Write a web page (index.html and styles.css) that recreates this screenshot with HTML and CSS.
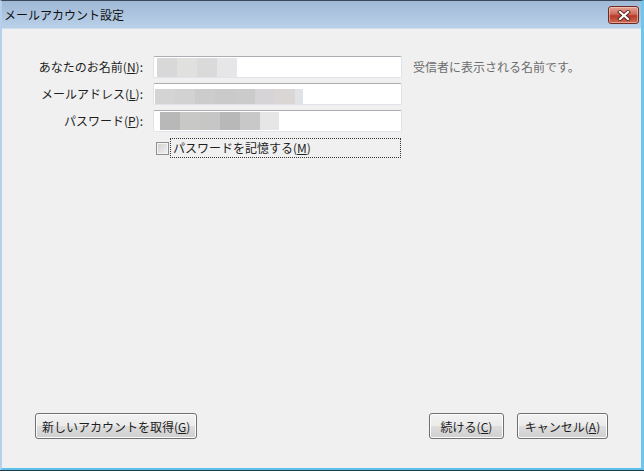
FILE: index.html
```html
<!DOCTYPE html>
<html lang="ja">
<head>
    <title>メールアカウント設定</title>
    <meta charset="UTF-8">
    <link rel="stylesheet" href="styles.css">
</head>
<body>
    <div class="window">
        <div class="titlebar">
            <span class="title">メールアカウント設定</span>
            <button class="close-btn" aria-label="閉じる">
                <svg width="14" height="11" viewBox="0 0 14 11">
                    <path d="M3 2 L11 9 M11 2 L3 9" stroke="#5a2420" stroke-width="4" stroke-linecap="square"/>
                    <path d="M3 2 L11 9 M11 2 L3 9" stroke="#ffffff" stroke-width="2.2" stroke-linecap="square"/>
                </svg>
            </button>
        </div>

        <div class="client">
            <div class="form">
                <label class="field-label" for="name">あなたのお名前(<u>N</u>):</label>
                <div class="input" id="name">
                    <div class="blur">
                        <span style="background:#d8d8d8"></span>
                        <span style="background:#e0e0de"></span>
                        <span style="background:#dadada"></span>
                        <span style="background:#e6e6e8"></span>
                    </div>
                </div>
                <span class="hint">受信者に表示される名前です。</span>

                <label class="field-label" for="email">メールアドレス(<u>L</u>):</label>
                <div class="input" id="email">
                    <div class="blur blur-email">
                        <span style="background:#d4d4d4"></span>
                        <span style="background:#d2d2d2"></span>
                        <span style="background:#cccccc"></span>
                        <span style="background:#cacaca"></span>
                        <span style="background:#cbcbcb"></span>
                        <span style="background:#d6d4d6"></span>
                        <span style="background:#dad6d6"></span>
                        <span style="background:#dfe2e6; width:8px"></span>
                    </div>
                </div>
                <span></span>

                <label class="field-label" for="password">パスワード(<u>P</u>):</label>
                <div class="input" id="password">
                    <div class="blur blur-pass">
                        <span style="background:#b8b8b8"></span>
                        <span style="background:#c8c8c6"></span>
                        <span style="background:#c6c6c6"></span>
                        <span style="background:#b8b8b8"></span>
                        <span style="background:#c8c8c8"></span>
                        <span style="background:#e6e6e6; width:19px"></span>
                    </div>
                </div>
                <span></span>

                <span></span>
                <div class="remember">
                    <span class="checkbox"></span>
                    <span class="remember-text">パスワードを記憶する(<u>M</u>)</span>
                </div>
                <span></span>
            </div>

            <div class="buttons">
                <button class="btn">新しいアカウントを取得(<u>G</u>)</button>
                <div class="buttons-right">
                    <button class="btn">続ける(<u>C</u>)</button>
                    <button class="btn btn-cancel">キャンセル(<u>A</u>)</button>
                </div>
            </div>
        </div>
    </div>
</body>
</html>
```

FILE: styles.css
```css
html, body {
    margin: 0;
    padding: 0;
}

body {
    width: 644px;
    height: 471px;
    font-family: "Noto Sans CJK JP", "Liberation Sans", sans-serif;
    font-size: 12px;
    color: #1e1e1e;
    overflow: hidden;
}

.window {
    height: 471px;
    box-sizing: border-box;
    display: flex;
    flex-direction: column;
    border-top: 1px solid #39485a;
    border-left: 2px solid #b4d0ec;
    border-right: 3px solid #6cc6ef;
    border-bottom: 3px solid #5cbfe9;
    box-shadow: inset 0 -1px 0 #cfe3f4;
    position: relative;
}

.window::after {
    content: "";
    position: absolute;
    left: -2px;
    right: -3px;
    bottom: -3px;
    height: 1px;
    background: #1d3b4f;
}

.titlebar {
    height: 27px;
    display: flex;
    justify-content: space-between;
    align-items: flex-start;
    background: linear-gradient(to bottom, #9fb8d4, #b9d0e9);
    border-bottom: 1px solid #cfdff0;
}

.title {
    padding: 5px 0 0 2px;
    line-height: 18px;
    color: #111;
}

.close-btn {
    width: 31px;
    height: 18px;
    margin: 5px 2px 0 0;
    padding: 0;
    border: 1px solid #6b2b24;
    border-radius: 3px;
    background: linear-gradient(to bottom, #e4a394 0%, #cf6a5a 45%, #b8392b 55%, #cc6b52 100%);
    box-shadow: inset 0 0 0 1px rgba(255, 220, 210, 0.5);
    display: flex;
    align-items: center;
    justify-content: center;
}

.client {
    flex: 1;
    background: #f0f0f0;
    display: flex;
    flex-direction: column;
    justify-content: space-between;
    padding-top: 27px;
    padding-bottom: 29px;
}

.form {
    display: grid;
    grid-template-columns: 141px 249px auto;
    grid-auto-rows: 22px;
    column-gap: 10px;
    row-gap: 5px;
}

.field-label {
    text-align: right;
    line-height: 22px;
    white-space: nowrap;
}

.input {
    box-sizing: border-box;
    background: #fff;
    border: 1px solid #e2e3ea;
    border-top-color: #abadb3;
    border-radius: 2px;
    padding: 0 2px;
    display: flex;
    align-items: center;
}

.blur {
    display: flex;
    height: 19px;
    margin-left: 1px;
}

.blur span {
    width: 20px;
}

.blur-email {
    height: 15px;
    margin-top: 4px;
    margin-left: -1px;
}

.blur-pass {
    height: 18px;
    margin-left: 4px;
}

.hint {
    margin-left: 1px;
    line-height: 22px;
    color: #6d6d6d;
    white-space: nowrap;
}

.remember {
    display: flex;
    align-items: center;
    height: 20px;
    margin-top: 1px;
}

.checkbox {
    box-sizing: border-box;
    width: 13px;
    height: 13px;
    margin-left: 3px;
    margin-top: 1px;
    border: 1px solid #8e8f8f;
    background: linear-gradient(135deg, #cfcfcf, #f2f2f2);
    box-shadow: inset 0 0 0 1px #f4f4f4;
}

.remember-text {
    flex: 1;
    box-sizing: border-box;
    height: 20px;
    line-height: 18px;
    margin-left: 1px;
    margin-right: 1px;
    padding-left: 2px;
    border: 1px dotted #333;
    white-space: nowrap;
}

.buttons {
    display: flex;
    justify-content: space-between;
    padding: 0 33px;
}

.buttons-right {
    display: flex;
    gap: 13px;
}

.btn {
    height: 26px;
    min-width: 75px;
    padding: 0 6px;
    font-family: inherit;
    font-size: 12px;
    color: #1e1e1e;
    border: 1px solid #707070;
    border-radius: 3px;
    background: linear-gradient(to bottom, #f2f2f2 0%, #ebebeb 50%, #dddddd 51%, #cfcfcf 100%);
    box-shadow: inset 0 0 0 1px #fcfcfc;
    white-space: nowrap;
}

.btn-cancel {
    min-width: 91px;
}
```
